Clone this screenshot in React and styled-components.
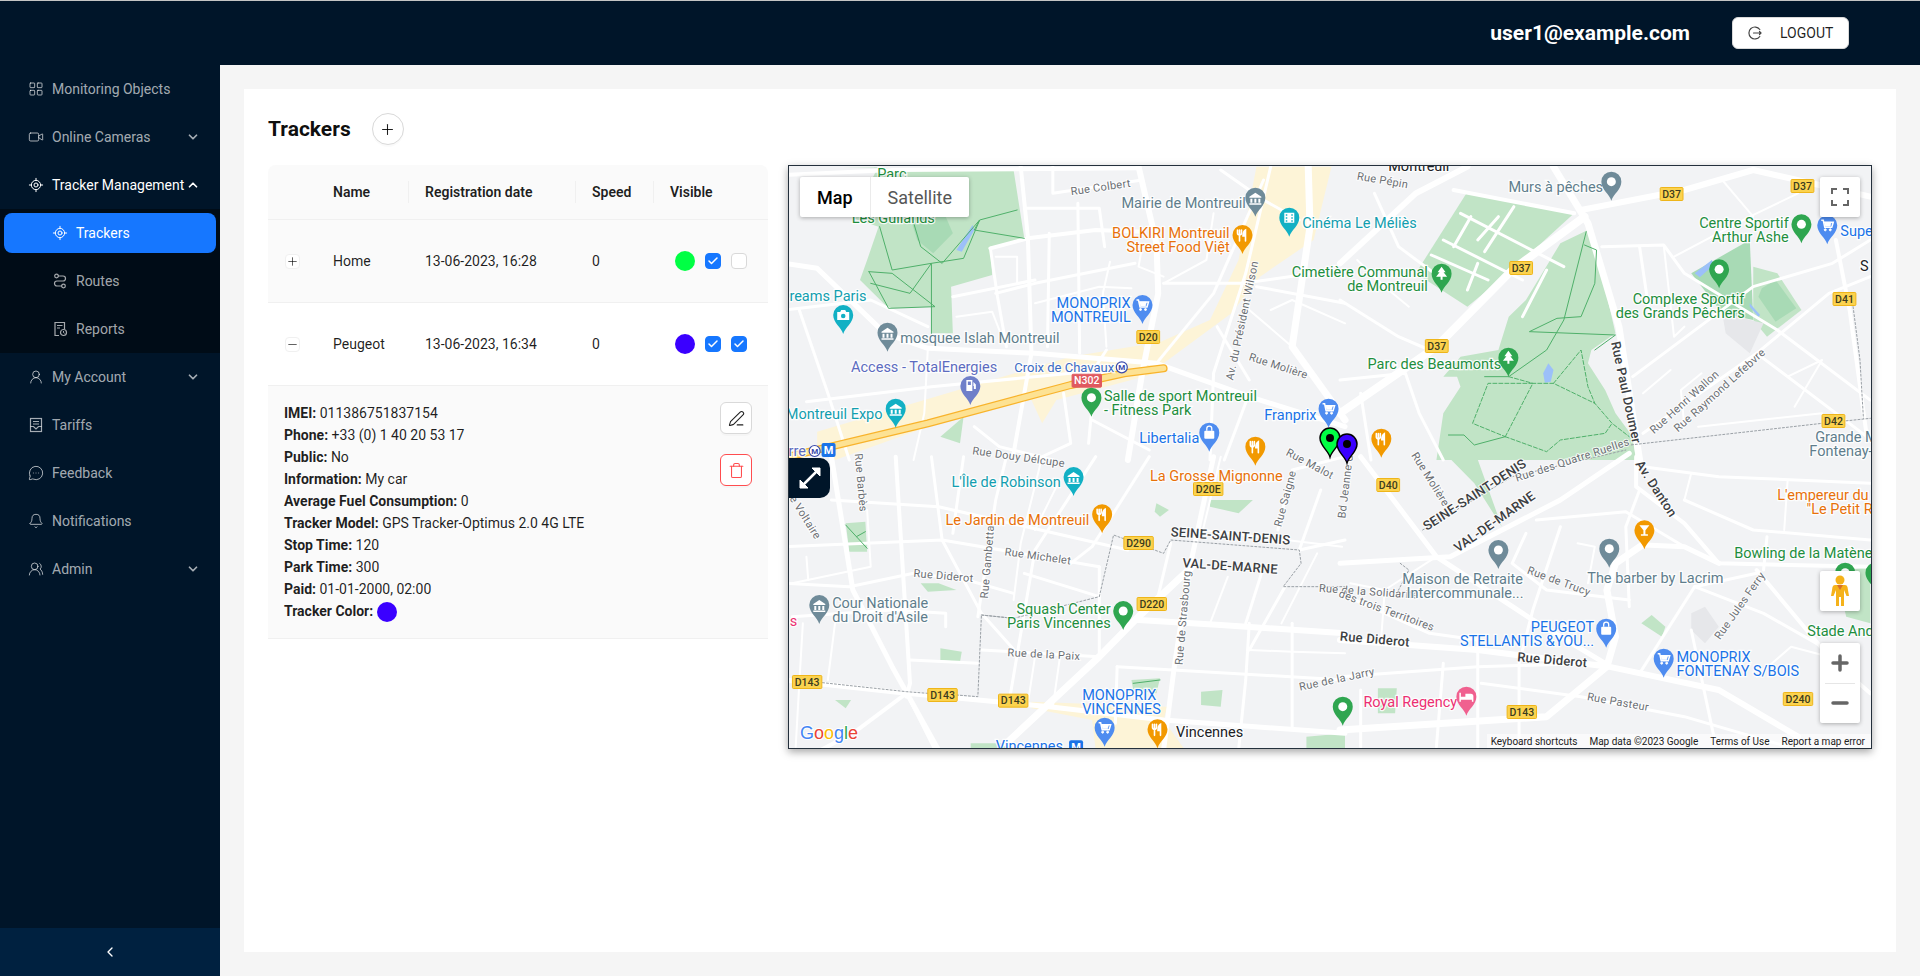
import React from "react";
import styled, { createGlobalStyle } from "styled-components";
import {
  LayoutGrid,
  Video,
  LocateFixed,
  UserRound,
  MessageCircleMore,
  Bell,
  UsersRound,
  ChevronDown,
  ChevronUp,
  ChevronLeft,
  Plus,
  Minus,
  Check,
  PenLine,
  Trash,
} from "lucide-react";

const GlobalStyle = createGlobalStyle`
  html, body { margin: 0; padding: 0; height: 100%; }
  body { font-family: Roboto, "Liberation Sans", sans-serif; font-size: 14px; color: rgba(0,0,0,.88); background: #f5f5f5; }
  * { box-sizing: border-box; }
`;

const Page = styled.div`
  display: flex;
  flex-direction: column;
  height: 976px;
  overflow: hidden;
`;

const Header = styled.header`
  flex: 0 0 65px;
  display: flex;
  align-items: center;
  justify-content: flex-end;
  gap: 42px;
  padding-right: 71px;
  background: #001529;
  border-top: 1px solid #c4c4c4;
`;

const UserName = styled.div`
  color: #fff;
  font-size: 21px;
  font-weight: 700;
  line-height: 28px;
`;

const LogoutButton = styled.button`
  width: 117px;
  height: 32px;
  display: flex;
  align-items: center;
  gap: 18px;
  padding: 0 0 0 15px;
  background: #fff;
  border: 1px solid #d9d9d9;
  border-radius: 6px;
  font: 400 14px Roboto, sans-serif;
  color: rgba(0, 0, 0, 0.88);
`;

const Body = styled.div`
  flex: 1;
  display: flex;
  min-height: 0;
`;

const Sidebar = styled.aside`
  flex: 0 0 220px;
  width: 220px;
  min-width: 0;
  display: flex;
  flex-direction: column;
  background: #001529;
`;

const Menu = styled.nav`
  flex: 1;
  display: flex;
  flex-direction: column;
`;

const SubMenu = styled.div`
  display: flex;
  flex-direction: column;
  background: #000c17;
`;

const MenuItem = styled.div`
  position: relative;
  height: 40px;
  margin: 4px;
  display: flex;
  align-items: center;
  gap: 8px;
  padding-left: ${(p) => (p.$sub ? "48px" : "24px")};
  border-radius: 8px;
  white-space: nowrap;
  color: ${(p) => (p.$active || p.$open ? "#fff" : "rgba(255,255,255,.65)")};
  background: ${(p) => (p.$active ? "#1677ff" : "transparent")};

  svg {
    flex-shrink: 0;
  }
`;

const Arrow = styled.span`
  position: absolute;
  right: 16px;
  top: 13px;
  display: flex;
`;

const Collapse = styled.div`
  flex: 0 0 48px;
  display: flex;
  align-items: center;
  justify-content: center;
  background: #002140;
  color: #fff;
`;

const Content = styled.main`
  flex: 1;
  padding: 24px;
  min-width: 0;
`;

const Card = styled.section`
  height: 100%;
  padding: 24px;
  background: #fff;
`;

const TitleRow = styled.div`
  display: flex;
  align-items: center;
  gap: 21px;
  height: 32px;
  margin-bottom: 20px;
`;

const Title = styled.h1`
  margin: 0;
  font-size: 21px;
  font-weight: 700;
  line-height: 28px;
  color: rgba(0, 0, 0, 0.95);
`;

const RoundButton = styled.button`
  width: 32px;
  height: 32px;
  padding: 0;
  display: flex;
  align-items: center;
  justify-content: center;
  background: #fff;
  border: 1px solid #d9d9d9;
  border-radius: 50%;
  box-shadow: 0 2px 0 rgba(0, 0, 0, 0.02);
  color: rgba(0, 0, 0, 0.88);
`;

const Split = styled.div`
  display: flex;
  gap: 20px;
  align-items: flex-start;
`;

const Table = styled.div`
  flex: 0 0 500px;
`;

const Row = styled.div`
  display: grid;
  grid-template-columns: 49px 92px 167px 78px 114px;
  align-items: center;
  height: ${(p) => (p.$head ? "55px" : "83px")};
  background: ${(p) => (p.$shaded ? "#fafafa" : "#fff")};
  border-bottom: 1px solid #f0f0f0;
  border-radius: ${(p) => (p.$head ? "8px 8px 0 0" : "0")};
`;

const HeadCell = styled.div`
  position: relative;
  padding-left: 16px;
  font-weight: 600;
  line-height: 22px;

  &:not(:last-child):not(:first-child)::after {
    content: "";
    position: absolute;
    top: 0;
    right: 0;
    width: 1px;
    height: 22px;
    background: #f0f0f0;
  }
`;

const Cell = styled.div`
  padding-left: 16px;
  line-height: 22px;
`;

const ExpandCell = styled.div`
  display: flex;
  padding-left: 17px;
`;

const ExpandIcon = styled.span`
  width: 15px;
  height: 15px;
  display: flex;
  align-items: center;
  justify-content: center;
  background: #fff;
  border: 1px solid #f0f0f0;
  border-radius: 4px;
`;

const VisibleCell = styled.div`
  display: flex;
  align-items: center;
  gap: 10px;
  padding-left: 21px;
`;

const Dot = styled.span`
  display: inline-block;
  width: 20px;
  height: 20px;
  border-radius: 50%;
  background: ${(p) => p.$color};
  vertical-align: middle;
`;

const CheckBox = styled.span`
  width: 16px;
  height: 16px;
  display: flex;
  align-items: center;
  justify-content: center;
  border-radius: 4px;
  color: #fff;
  background: ${(p) => (p.$on ? "#1677ff" : "#fff")};
  border: 1px solid ${(p) => (p.$on ? "#1677ff" : "#d9d9d9")};
`;

const Details = styled.div`
  display: flex;
  justify-content: space-between;
  padding: 16px 16px 16px;
  height: 253px;
  background: #fafafa;
  border-bottom: 1px solid #f0f0f0;
`;

const InfoLine = styled.div`
  line-height: 22px;
  white-space: nowrap;
`;

const Actions = styled.div`
  display: flex;
  flex-direction: column;
  gap: 20px;
`;

const IconButton = styled.button`
  width: 32px;
  height: 32px;
  padding: 0;
  display: flex;
  align-items: center;
  justify-content: center;
  background: #fff;
  border-radius: 6px;
  border: 1px solid ${(p) => (p.$danger ? "#ff4d4f" : "#d9d9d9")};
  color: ${(p) => (p.$danger ? "#ff4d4f" : "rgba(0,0,0,.88)")};
  box-shadow: 0 2px 0 rgba(0, 0, 0, 0.02);
`;

const MapFrame = styled.div`
  position: relative;
  flex: 0 0 1084px;
  height: 584px;
  overflow: hidden;
  border: 1px solid #24303c;
  box-shadow: 0 3px 8px rgba(0, 0, 0, 0.35);
  background: #f2f3f5;
`;

const MapCanvas = styled.svg`
  display: block;
  width: 1082px;
  height: 582px;
  font-family: Roboto, sans-serif;

  polyline, polygon {
    vector-effect: non-scaling-stroke;
    stroke-linejoin: round;
    stroke-linecap: round;
  }
`;

const LABEL_COLORS = {
  green: "#1e8e3e",
  blue: "#1a73e8",
  teal: "#129eaf",
  orange: "#e8710a",
  slate: "#5f7d8c",
  indigo: "#5c6bc0",
  pink: "#ec2f72",
  ink: "#202124",
  transit: "#3c6bc4",
};

const Label = styled.text`
  font-size: ${(p) => (p.$c === "transit" ? "13px" : "14.5px")};
  fill: ${(p) => LABEL_COLORS[p.$c]};
  stroke: #fff;
  stroke-width: 2.5px;
  stroke-opacity: 0.85;
  paint-order: stroke;
`;

const StreetName = styled.text`
  font-size: ${(p) => (p.$big ? "13px" : "11px")};
  font-weight: ${(p) => (p.$big ? 500 : 400)};
  letter-spacing: ${(p) => (p.$big ? "0.2px" : "0.3px")};
  fill: ${(p) => (p.$big ? "#3c4043" : "#6b6f74")};
  stroke: #fff;
  stroke-width: 2px;
  stroke-opacity: 0.8;
  paint-order: stroke;
`;

const ShieldText = styled.text`
  font-size: 10.5px;
  font-weight: 500;
  fill: ${(p) => (p.$red ? "#fff" : "#3c3c1e")};
  text-anchor: middle;
  dominant-baseline: central;
`;

const MetroText = styled.text`
  font-size: 8px;
  font-weight: 700;
  fill: #3949ab;
  text-anchor: middle;
  dominant-baseline: central;
`;

const MetroSquare = styled.text`
  font-size: 11px;
  font-weight: 700;
  fill: #fff;
  text-anchor: middle;
  dominant-baseline: central;
`;

const MapSwitch = styled.div`
  position: absolute;
  left: 11px;
  top: 11px;
  display: flex;
  height: 40px;
  background: #fff;
  border-radius: 2px;
  box-shadow: 0 1px 4px rgba(0, 0, 0, 0.3);
  font-size: 18px;
`;

const SwitchTab = styled.div`
  display: flex;
  align-items: center;
  padding: 0 17px;
  color: ${(p) => (p.$active ? "#000" : "#565656")};
  font-weight: ${(p) => (p.$active ? 500 : 400)};
  border-right: ${(p) => (p.$active ? "1px solid #ebebeb" : "0")};
`;

const MapControl = styled.div`
  position: absolute;
  right: 11px;
  top: ${(p) => p.$top}px;
  width: 40px;
  height: ${(p) => p.$h || 40}px;
  display: flex;
  flex-direction: column;
  align-items: center;
  justify-content: center;
  background: #fff;
  border-radius: 2px;
  box-shadow: 0 1px 4px rgba(0, 0, 0, 0.3);
  color: #666;
`;

const ZoomStep = styled.div`
  flex: 1;
  width: 30px;
  display: flex;
  align-items: center;
  justify-content: center;

  & + & {
    border-top: 1px solid #e6e6e6;
  }
`;

const ExpandMap = styled.div`
  position: absolute;
  left: 0;
  top: 292px;
  width: 41px;
  height: 40px;
  display: flex;
  align-items: center;
  justify-content: center;
  background: #001529;
  border-radius: 0 10px 10px 0;
  color: #fff;
`;

const Attribution = styled.div`
  position: absolute;
  right: 0;
  bottom: 0;
  display: flex;
  gap: 12px;
  height: 14px;
  padding: 0 6px 0 4px;
  align-items: center;
  background: rgba(255, 255, 255, 0.6);
  font-size: 10px;
  color: #222;
  white-space: nowrap;
`;

// the map is traced in four crops, each with its own origin and scale
const QUADS = {
  a: [785, 160, 2.8],
  b: [1340, 160, 2.904],
  c: [785, 450, 2.8],
  d: [1340, 450, 2.904],
};
const MAP_X = 789;
const MAP_Y = 166;

const at = (q, x, y) => [
  QUADS[q][0] - MAP_X + x / QUADS[q][2],
  QUADS[q][1] - MAP_Y + y / 3,
];
const quadTransform = (q) =>
  `translate(${QUADS[q][0] - MAP_X} ${QUADS[q][1] - MAP_Y}) scale(${1 / QUADS[q][2]} ${1 / 3})`;

const ZONES = [
  ["a", "1320,20 1530,20 1480,240 1330,350 1300,390 1250,460 1060,610 1030,630 1000,570 1190,480 1270,300"],
  ["a", "90,815 800,590 1000,555 1040,640 760,720 720,790 690,720 400,800 140,900 90,860"],
  ["c", "690,755 1070,770 1060,810 1120,900 870,900 860,810 690,775"],
];

const PARKS = [
  ["a", "160,22 640,30 670,235 575,262 580,345 465,380 470,520 410,520 410,440 290,445 210,360 230,300 262,200 190,175 260,22", "#c1e4c6"],
  ["a", "350,170 450,170 470,220 415,280 370,240", "#a8dab5"],
  ["b", "370,95 680,160 510,320 370,440 220,340", "#c1e4c6"],
  ["b", "720,210 750,270 760,340 800,520 730,570 720,610 770,690 800,760 850,830 860,900 280,900 300,760 350,680 340,650 300,650 350,590 460,570 490,470 540,420 640,250", "#c1e4c6"],
  ["b", "1020,340 1190,240 1200,480 1110,460", "#a8dab5"],
  ["b", "1200,320 1270,340 1340,450 1240,530 1200,480", "#c1e4c6"],
  ["b", "1225,385 1265,360 1325,445 1265,485 1215,410", "#a8dab5"],
  ["b", "1110,460 1230,490 1190,580 1120,520", "#e6e7ea"],
  ["a", "435,830 500,770 490,850", "#c1e4c6"],
  ["c", "1190,150 1310,150 1270,190 1190,170", "#c1e4c6"],
  ["c", "1040,160 1075,180 1050,200 1035,185", "#c1e4c6"],
  ["c", "170,220 225,215 230,305 180,305", "#c1e4c6"],
  ["c", "380,400 430,400 480,420 400,425", "#c1e4c6"],
  ["c", "435,595 495,605 490,635 435,630", "#c1e4c6"],
  ["c", "970,690 1050,685 1040,730 975,720", "#c1e4c6"],
  ["c", "1165,725 1225,720 1220,770 1165,765", "#c1e4c6"],
  ["c", "140,750 185,750 170,775", "#c1e4c6"],
  ["c", "520,880 620,880 620,900 520,900", "#c1e4c6"],
  ["c", "1460,860 1568,850 1568,900 1460,900", "#c1e4c6"],
  ["d", "875,520 905,495 945,530 935,560", "#c1e4c6"],
  ["d", "110,715 165,715 160,790 110,790", "#c1e4c6"],
  ["d", "1020,490 1060,470 1100,530 1060,580 1020,540", "#e6e7ea"],
  ["d", "1440,365 1540,350 1540,520 1470,500", "#c1e4c6"],
  ["d", "295,0 390,0 470,230 390,100", "#c1e4c6"],
];

const WATER = [
  ["a", "525,195 530,210 495,275 480,270"],
  ["b", "590,640 605,610 620,630 612,665 595,668"],
  ["b", "1030,340 1080,300 1085,315 1045,352"],
  ["b", "1190,430 1220,465 1215,470 1190,440"],
];

const ROADS = [
  // top left
  ["a", 6, "990,20 1040,250 1045,400 1000,640 960,900"],
  ["a", 3, "1360,20 1290,340 1200,640 1190,900"],
  ["a", 5, "0,310 90,325 280,520 400,565 700,580 1040,610 1300,710 1568,800"],
  ["a", 4, "660,20 680,230 690,580 640,880"],
  ["a", 4, "575,265 680,235 870,210 1000,215"],
  ["a", 3, "575,265 595,410 620,560"],
  ["a", 3, "590,400 700,370 980,310"],
  ["a", 3, "820,130 825,580"],
  ["a", 3, "670,145 880,145 895,260"],
  ["a", 3, "750,20 750,100 1000,60"],
  ["a", 4, "0,45 300,30 990,25"],
  ["a", 3, "470,410 700,360"],
  ["a", 2, "480,470 580,455 600,510"],
  ["a", 3, "740,220 735,560"],
  ["a", 3, "60,725 410,680 800,640 1000,640"],
  ["a", 3, "1040,610 1200,400 1340,60"],
  ["a", 7, "1465,20 1470,200 1420,560 1568,780"],
  ["a", 3, "1060,370 1280,370 1480,340"],
  ["a", 3, "1210,500 1300,660"],
  ["a", 3, "1320,380 1568,430"],
  ["a", 3, "0,450 240,420 400,500"],
  ["a", 3, "40,450 120,700 180,900"],
  ["a", 2, "400,565 390,760 360,900"],
  ["a", 3, "860,780 1020,870"],
  ["a", 3, "900,570 870,620 850,850"],
  ["a", 3, "1220,30 1340,120 1440,180"],
  ["a", 3, "1300,700 1230,900"],
  ["a", 3, "780,700 800,850 700,900"],
  ["a", 3, "530,800 600,860 750,900"],
  ["a", 2, "1000,260 990,320 1060,350"],
  ["a", 2, "910,305 890,400 900,560"],
  ["a", 2, "700,430 880,380 970,385"],
  ["a", 2, "590,290 650,290 650,370"],
  ["a", 2, "1200,160 1180,300 1060,370"],
  ["a", 2, "1360,450 1420,420 1568,490"],
  ["a", 2, "1300,450 1420,560"],
  // top right
  ["b", 6, "0,310 220,100 370,20"],
  ["b", 7, "620,20 720,190 810,500 870,900"],
  ["b", 6, "700,150 1000,90 1200,30 1540,110"],
  ["b", 8, "710,170 500,330 280,560 0,760"],
  ["b", 4, "330,90 680,160"],
  ["b", 3, "760,260 940,255 1000,340 1270,510 1540,720"],
  ["b", 3, "850,650 1200,380 1430,310 1540,240"],
  ["b", 3, "1210,580 1420,400 1540,350"],
  ["b", 4, "1440,240 1480,450 1530,830"],
  ["b", 3, "880,820 1210,580 1530,830"],
  ["b", 3, "0,660 190,640 230,760 300,900"],
  ["b", 3, "100,100 170,260 300,360"],
  ["b", 3, "0,420 170,530 260,570"],
  ["b", 3, "60,700 90,900"],
  ["b", 3, "870,260 900,470"],
  ["b", 2, "970,290 1190,170 1330,100"],
  ["b", 2, "1040,800 1400,760"],
  ["b", 3, "350,160 650,320"],
  ["b", 3, "300,240 530,360"],
  ["b", 3, "265,285 430,360"],
  ["b", 3, "505,140 420,275"],
  ["b", 3, "380,170 330,260"],
  ["b", 3, "460,170 400,240"],
  ["b", 3, "400,310 370,390"],
  ["b", 3, "600,330 530,470"],
  ["b", 2, "50,300 130,380 200,440"],
  ["b", 2, "940,255 970,530 1000,500"],
  ["b", 2, "1110,60 1200,170"],
  ["b", 2, "1050,640 990,690 1000,800"],
  ["b", 2, "1300,650 1400,600 1320,740"],
  ["b", 2, "880,700 960,630"],
  // bottom left
  ["c", 5, "130,20 190,420 300,650 430,900"],
  ["c", 4, "310,20 350,700 340,740"],
  ["c", 3, "410,20 440,270 550,490 650,610"],
  ["c", 3, "0,290 440,270 880,350"],
  ["c", 3, "130,150 430,170 960,300"],
  ["c", 3, "670,370 880,440"],
  ["c", 3, "620,20 590,150 540,500"],
  ["c", 3, "870,20 700,300 630,740"],
  ["c", 3, "1020,20 860,290 800,340"],
  ["c", 7, "1140,350 990,500 880,620 620,880"],
  ["c", 5, "1200,20 1130,370 1090,650 1060,900"],
  ["c", 3, "0,400 180,410 360,370 510,390 640,430"],
  ["c", 5, "0,690 340,730 740,770 1060,810 1568,850"],
  ["c", 4, "340,730 190,850 100,900"],
  ["c", 3, "340,730 420,900"],
  ["c", 6, "990,510 1220,525 1568,550"],
  ["c", 3, "550,600 880,620"],
  ["c", 3, "350,630 540,640"],
  ["c", 3, "930,650 1568,690"],
  ["c", 3, "1300,520 1290,690 1270,900"],
  ["c", 3, "1420,520 1420,830"],
  ["c", 3, "1340,350 1290,520"],
  ["c", 3, "880,350 880,620"],
  ["c", 3, "20,500 300,480 450,490 450,530"],
  ["c", 3, "1400,410 1300,600"],
  ["c", 3, "1080,280 1040,460"],
  ["c", 3, "1500,120 1440,300 1568,270"],
  ["c", 3, "1568,20 1420,60 1380,240"],
  ["c", 3, "930,650 925,820"],
  ["c", 2, "60,320 65,390"],
  ["c", 3, "500,20 470,250"],
  ["c", 2, "230,180 240,350 20,400"],
  ["c", 2, "760,110 700,240"],
  ["c", 2, "720,20 660,280 640,450"],
  ["c", 2, "140,520 120,690"],
  ["c", 2, "50,520 40,700 30,890"],
  ["c", 2, "700,620 680,760"],
  ["c", 2, "770,620 750,770"],
  ["c", 2, "1220,20 1170,240 1560,290"],
  ["c", 2, "1240,380 1190,520"],
  ["c", 2, "1490,310 1390,520"],
  ["c", 2, "1300,600 1420,605 1568,610"],
  // bottom right
  ["d", 6, "0,570 400,600 780,650 1100,720 1330,860"],
  ["d", 5, "60,20 280,320 560,510 770,640"],
  ["d", 5, "840,10 640,150 320,320 0,340"],
  ["d", 4, "860,20 860,110 1000,220 1100,340 1540,350"],
  ["d", 7, "885,280 800,340 775,420 800,560 775,650 600,800 0,840"],
  ["d", 5, "885,285 1000,290 1100,340"],
  ["d", 3, "570,210 830,185 1000,290"],
  ["d", 3, "870,120 830,230 840,470"],
  ["d", 4, "1210,360 1420,620 1540,730"],
  ["d", 3, "1210,370 1030,410 870,670"],
  ["d", 3, "1000,150 1200,240 1540,270"],
  ["d", 3, "880,50 1100,80 1540,100"],
  ["d", 3, "410,700 700,740 1000,800 1300,890"],
  ["d", 3, "0,680 400,650 750,640"],
  ["d", 3, "540,250 500,340 600,420 840,450"],
  ["d", 3, "640,230 560,480 520,640 520,890"],
  ["d", 3, "400,560 400,890"],
  ["d", 3, "300,640 280,890"],
  ["d", 3, "60,720 60,890"],
  ["d", 3, "1030,410 1230,490 1400,590"],
  ["d", 3, "1020,540 1090,880"],
  ["d", 3, "1240,260 1230,360"],
  ["d", 3, "0,430 260,550 400,570"],
  ["d", 2, "1000,150 1020,70"],
  ["d", 2, "1300,90 1290,240"],
  ["d", 2, "1210,680 1310,590 1420,620"],
  ["d", 2, "130,420 120,560"],
  ["d", 2, "30,400 130,420 280,320"],
  ["d", 2, "690,280 740,290 720,400"],
];

const PARK_PATHS = [
  ["a", "265,200 300,330 410,310 500,295 545,180 650,150"],
  ["a", "355,170 380,260 440,310 545,180 530,210 670,235"],
  ["a", "235,335 300,340 420,440 290,445 235,335"],
  ["a", "240,370 350,400 410,310 410,520"],
  ["b", "715,215 650,480 600,570 490,650 420,650"],
  ["b", "710,255 745,270 740,370 700,470 630,475 550,515 800,525 740,570"],
  ["b", "315,825 360,825 390,855 480,830"],
  ["c", "170,225 200,260 230,295"],
  ["c", "200,260 225,245"],
  ["c", "975,700 1050,690"],
];

const PARK_TRAILS = [
  ["b", "480,830 560,670 430,670 385,790 480,830"],
  ["b", "490,650 560,670 620,670 740,730 790,790 840,830"],
  ["b", "620,670 700,570 720,680 740,730"],
  ["b", "480,830 600,875 640,840 770,820 790,790"],
];

const BORDERS = [
  ["b", "800,860 1400,790 1540,775"],
  ["b", "1490,440 1510,600 1520,775"],
  ["c", "105,698 340,725 400,730"],
  ["c", "480,735 540,740 550,495 640,505 880,440 920,255 1060,310 1080,270 1440,300 1445,340 1395,410 1568,410"],
  ["c", "550,495 640,505"],
  ["d", "240,240 500,80 830,0"],
  ["d", "175,340 200,360 160,440"],
];

const SHIELDS = [
  ["a", 1017, 531, "D20"],
  ["b", 963, 102, "D37"],
  ["b", 1343, 78, "D37"],
  ["b", 526, 324, "D37"],
  ["b", 281, 558, "D37"],
  ["b", 1465, 417, "D41"],
  ["b", 1433, 783, "D42"],
  ["c", 1185, 117, "D20E"],
  ["c", 990, 279, "D290"],
  ["c", 1027, 462, "D220"],
  ["c", 62, 696, "D143"],
  ["c", 441, 735, "D143"],
  ["c", 639, 752, "D143"],
  ["d", 140, 105, "D40"],
  ["d", 1330, 747, "D240"],
  ["d", 528, 786, "D143"],
];

const LABELS = [
  ["a", 258, 42, "Parc", "green"],
  ["a", 187, 175, "Les Guilands", "green"],
  ["a", 942, 130, "Mairie de Montreuil", "slate"],
  ["a", 1448, 190, "Cinéma Le Méliès", "teal"],
  ["a", 1245, 220, "BOLKIRI Montreuil", "orange", "end"],
  ["a", 1245, 262, "Street Food Việt", "orange", "end"],
  ["b", 255, 337, "Cimetière Communal", "green", "end"],
  ["b", 255, 379, "de Montreuil", "green", "end"],
  ["a", 228, 408, "Dreams Paris", "teal", "end"],
  ["a", 323, 535, "mosquee Islah Montreuil", "slate"],
  ["a", 968, 430, "MONOPRIX", "blue", "end"],
  ["a", 968, 472, "MONTREUIL", "blue", "end"],
  ["a", 185, 622, "Access - TotalEnergies", "indigo"],
  ["a", 642, 622, "Croix de Chavaux", "transit"],
  ["a", 273, 763, "Montreuil Expo", "teal", "end"],
  ["a", 893, 709, "Salle de sport Montreuil", "green"],
  ["a", 893, 751, "- Fitness Park", "green"],
  ["a", 1488, 766, "Franprix", "blue", "end"],
  ["a", 992, 835, "Libertalia", "blue"],
  ["a", 10, 873, "rre", "indigo"],
  ["b", 489, 82, "Murs à pêches", "slate"],
  ["b", 1303, 190, "Centre Sportif", "green", "end"],
  ["b", 1303, 232, "Arthur Ashe", "green", "end"],
  ["b", 1453, 214, "Super", "blue"],
  ["b", 1510, 318, "S", "ink"],
  ["b", 1012, 418, "Complexe Sportif", "green", "middle"],
  ["b", 988, 460, "des Grands Pêchers", "green", "middle"],
  ["b", 80, 613, "Parc des Beaumonts", "green"],
  ["b", 1380, 832, "Grande Mare", "slate"],
  ["b", 1363, 874, "Fontenay-", "slate"],
  ["b", 140, 18, "Montreuil", "ink"],
  ["c", 772, 97, "L'Île de Robinson", "teal", "end"],
  ["c", 1022, 80, "La Grosse Mignonne", "orange"],
  ["c", 852, 210, "Le Jardin de Montreuil", "orange", "end"],
  ["c", 132, 460, "Cour Nationale", "slate"],
  ["c", 132, 502, "du Droit d'Asile", "slate"],
  ["c", 912, 478, "Squash Center", "green", "end"],
  ["c", 912, 520, "Paris Vincennes", "green", "end"],
  ["c", 832, 737, "MONOPRIX", "blue"],
  ["c", 832, 778, "VINCENNES", "blue"],
  ["c", 1095, 847, "Vincennes", "ink"],
  ["c", 590, 890, "Vincennes", "blue"],
  ["c", 13, 515, "s", "pink"],
  ["d", 1270, 136, "L'empereur du", "orange"],
  ["d", 1355, 178, "\"Le Petit R", "orange"],
  ["d", 356, 388, "Maison de Retraite", "slate", "middle"],
  ["d", 363, 430, "Intercommunale...", "slate", "middle"],
  ["d", 718, 385, "The barber by Lacrim", "slate"],
  ["d", 1145, 310, "Bowling de la Matène", "green"],
  ["d", 1357, 544, "Stade And", "green"],
  ["d", 738, 532, "PEUGEOT", "blue", "end"],
  ["d", 738, 574, "STELLANTIS &YOU...", "blue", "end"],
  ["d", 977, 622, "MONOPRIX", "blue"],
  ["d", 977, 664, "FONTENAY S/BOIS", "blue"],
  ["d", 68, 757, "Royal Regency", "pink"],
];

const STREETS = [
  ["a", 800, 95, "Rue Colbert", -8],
  ["a", 1300, 590, "Rue Molière", 18],
  ["a", 1245, 660, "Av. du Président Wilson", -78],
  ["a", 525, 872, "Rue Douy Délcupe", 8],
  ["c", 205, 10, "Rue Barbès", 85],
  ["b", 50, 48, "Rue Pépin", 10],
  ["b", 800, 545, "Rue Paul Doumer", 78, true],
  ["b", 905, 815, "Rue Henri Wallon", -42],
  ["b", 975, 810, "Rue Raymond Lefebvre", -42],
  ["d", 510, 85, "Rue des Quatre Ruelles", -18],
  ["d", 215, 10, "Rue Molière", 58],
  ["c", 615, 305, "Rue Michelet", 8],
  ["c", 360, 370, "Rue Diderot", 5],
  ["c", 558, 445, "Rue Gambetta", -85],
  ["c", 20, 140, "e Voltaire", 58],
  ["c", 1380, 230, "Rue Saigne", -75],
  ["d", 5, 205, "Bd Jeanne d'Arc", -83],
  ["c", 1405, 5, "Rue Malot", 28],
  ["c", 1103, 645, "Rue de Strasbourg", -85],
  ["c", 623, 608, "Rue de la Paix", 3],
  ["c", 1440, 712, "Rue de la Jarry", -12],
  ["c", 1495, 415, "Rue de la Solidarité", 4],
  ["d", -2, 430, "des trois Territoires", 20],
  ["d", 0, 558, "Rue Diderot", 5, true],
  ["d", 515, 620, "Rue Diderot", 5, true],
  ["d", 868, 35, "Av. Danton", 57, true],
  ["d", 545, 360, "Rue de Trucy", 20],
  ["d", 1095, 565, "Rue Jules Ferry", -55],
  ["d", 718, 740, "Rue Pasteur", 10],
];

const PIN_COLORS = {
  orange: "#f29900",
  green: "#2fa650",
  blue: "#4e8cf0",
  slate: "#6f8b99",
  teal: "#12b0c4",
  indigo: "#6f7fc9",
  pink: "#f0608f",
};

const PINS = [
  ["a", 1317, 170, "slate", "bank"],
  ["a", 1412, 230, "teal", "film"],
  ["a", 1281, 282, "orange", "fork"],
  ["b", 295, 398, "green", "tree"],
  ["a", 163, 522, "teal", "camera"],
  ["a", 287, 575, "slate", "bank"],
  ["a", 1001, 492, "blue", "cart"],
  ["a", 519, 735, "indigo", "fuel"],
  ["a", 310, 803, "teal", "bank"],
  ["a", 858, 770, "green", "dot"],
  ["a", 1522, 803, "blue", "cart"],
  ["a", 1188, 875, "blue", "bag"],
  ["c", 1317, 47, "orange", "fork"],
  ["b", 120, 893, "orange", "fork"],
  ["b", 788, 122, "slate", "dot"],
  ["b", 1340, 250, "green", "dot"],
  ["b", 1415, 253, "blue", "cart"],
  ["b", 1101, 385, "green", "dot"],
  ["b", 489, 650, "green", "tree"],
  ["c", 808, 138, "teal", "bank"],
  ["c", 888, 250, "orange", "fork"],
  ["c", 96, 522, "slate", "bank"],
  ["c", 947, 540, "green", "dot"],
  ["c", 895, 890, "blue", "cart"],
  ["c", 1043, 895, "orange", "fork"],
  ["d", 884, 298, "orange", "glass"],
  ["d", 460, 357, "slate", "dot"],
  ["d", 782, 353, "slate", "dot"],
  ["d", 1467, 425, "green", "dot"],
  ["d", 1555, 425, "green", "dot"],
  ["d", 773, 593, "blue", "bag"],
  ["d", 940, 683, "blue", "cart"],
  ["d", 367, 797, "pink", "bed"],
  ["d", 8, 827, "green", "dot"],
];

const PIN_PATH = "M0 0C-2-7-10-11-10-19A10 10 0 1 1 10-19C10-11 2-7 0 0Z";

function PinGlyph({ kind }) {
  switch (kind) {
    case "fork":
      return (
        <g stroke="#fff" fill="none" strokeWidth="1.6" strokeLinecap="round">
          <path d="M-3-24v4.5M-3-20-3-13M-5-24v3a2 2 0 0 0 4 0v-3" />
          <path d="M3-13V-24c-2 1-2.5 3-2.5 6H3" fill="#fff" />
        </g>
      );
    case "cart":
      return (
        <g fill="#fff" stroke="#fff">
          <path d="M-6-24h2l1.5 7h7l1.5-5h-9" fill="none" strokeWidth="1.5" />
          <path d="M-3-22h7l-1 4h-5z" strokeWidth=".5" />
          <circle cx="-2" cy="-14.5" r="1" />
          <circle cx="3" cy="-14.5" r="1" />
        </g>
      );
    case "bag":
      return (
        <g>
          <rect x="-5" y="-21" width="10" height="8" rx="1" fill="#fff" />
          <path d="M-2.5-21v-2a2.5 2.5 0 0 1 5 0v2" fill="none" stroke="#fff" strokeWidth="1.3" />
        </g>
      );
    case "tree":
      return <path d="M0-26-4-20.5h2l-3.5 4.5H-1v3h2v-3h4.5L2-20.5h2z" fill="#fff" />;
    case "bank":
      return <path d="M-6-20 0-24 6-20v1H-6zM-5-18h2v4h-2zM-1-18h2v4h-2zM3-18h2v4H3zM-6-13.5H6V-12H-6z" fill="#fff" />;
    case "film":
      return <path d="M-5-24H5v10H-5zM-3.5-22.5v1.5h1.5v-1.5zM-3.5-19.5v1.5h1.5v-1.5zM-3.5-16.5v1.5h1.5v-1.5zM2-22.5v1.5h1.5v-1.5zM2-19.5v1.5h1.5v-1.5zM2-16.5v1.5h1.5v-1.5z" fill="#fff" fillRule="evenodd" />;
    case "camera":
      return (
        <g>
          <path d="M-6-22h3l1-2h4l1 2h3v8H-6z" fill="#fff" />
          <circle cy="-18" r="2.3" fill="#12b0c4" />
        </g>
      );
    case "fuel":
      return <path d="M-4-25H2v11H-4zM-2.5-23.5v3.5h3v-3.5zM3-23l2.5 2.5V-16H3.5v-3H3z" fill="#fff" fillRule="evenodd" />;
    case "glass":
      return <path d="M-5-24H5L1-19v4h2.5v1.5h-7V-15H-1v-4z" fill="#fff" />;
    case "bed":
      return <path d="M-7-23h1.5v4H-1v-3h5.5a2.5 2.5 0 0 1 2.5 2.5V-14H5.5v-2h-11v2H-7z" fill="#fff" />;
    default:
      return <circle cy="-19" r="4.5" fill="#fff" />;
  }
}

function Pin({ q, x, y, color, glyph }) {
  const [px, py] = at(q, x, y);
  return (
    <g transform={`translate(${px} ${py})`}>
      <path d={PIN_PATH} fill={PIN_COLORS[color]} />
      <PinGlyph kind={glyph} />
    </g>
  );
}

function TrackerPin({ x, y, color }) {
  return (
    <g transform={`translate(${x} ${y})`}>
      <path d={PIN_PATH} fill={color} stroke="#000" strokeWidth="1.5" />
      <circle cy="-19" r="4" fill="#000" />
    </g>
  );
}

function Shield({ q, x, y, text, red }) {
  const [px, py] = at(q, x, y);
  const w = text.length * 6.6 + 3;
  return (
    <g transform={`translate(${px} ${py})`}>
      <rect
        x={-w / 2}
        y="-6.5"
        width={w}
        height="13"
        rx="1"
        fill={red ? "#e0585f" : "#fbd24e"}
        stroke={red ? "#e0585f" : "#eeb51a"}
      />
      <ShieldText $red={red}>{text}</ShieldText>
    </g>
  );
}

function Street({ q, x, y, text, angle, big }) {
  const [px, py] = at(q, x, y);
  return (
    <StreetName $big={big} transform={`translate(${px} ${py}) rotate(${angle})`} dominantBaseline="central">
      {text}
    </StreetName>
  );
}

function MetroBadge({ q, x, y }) {
  const [px, py] = at(q, x, y);
  return (
    <g transform={`translate(${px} ${py})`}>
      <circle r="5.5" fill="#fff" stroke="#3949ab" strokeWidth="1.2" />
      <MetroText>M</MetroText>
    </g>
  );
}

function MetroSign({ q, x, y }) {
  const [px, py] = at(q, x, y);
  return (
    <g transform={`translate(${px} ${py})`}>
      <rect x="-7" y="-7" width="14" height="14" rx="2" fill="#1a73e8" />
      <MetroSquare>M</MetroSquare>
    </g>
  );
}

function MapDrawing() {
  const [sx1, sy1] = at("d", 245, 232);
  const [sx2, sy2] = at("d", 335, 297);
  const [vx1, vy1] = at("c", 1080, 245);
  const [vx2, vy2] = at("c", 1113, 338);
  const [gx, gy] = at("c", 42, 866);
  return (
    <MapCanvas viewBox="0 0 1082 582">
      <rect width="1082" height="582" fill="#f2f3f5" />
      {ZONES.map(([q, pts], i) => (
        <polygon key={i} transform={quadTransform(q)} points={pts} fill="#fdf4d7" />
      ))}
      {PARKS.map(([q, pts, fill], i) => (
        <polygon key={i} transform={quadTransform(q)} points={pts} fill={fill} />
      ))}
      {WATER.map(([q, pts], i) => (
        <polygon key={i} transform={quadTransform(q)} points={pts} fill="#9cc0f9" />
      ))}
      {ROADS.map(([q, w, pts], i) => (
        <polyline key={i} transform={quadTransform(q)} points={pts} fill="none" stroke="#fff" strokeWidth={w} />
      ))}
      {PARK_PATHS.map(([q, pts], i) => (
        <polyline key={i} transform={quadTransform(q)} points={pts} fill="none" stroke="#4fb06a" strokeWidth="1" />
      ))}
      {PARK_TRAILS.map(([q, pts], i) => (
        <polyline key={i} transform={quadTransform(q)} points={pts} fill="none" stroke="#4fb06a" strokeWidth="1" strokeDasharray="4 2" />
      ))}
      <polyline transform={quadTransform("a")} points="10,890 400,790 800,675 950,640 1060,625" fill="none" stroke="#f8b32c" strokeWidth="8" />
      <polyline transform={quadTransform("a")} points="10,890 400,790 800,675 950,640 1060,625" fill="none" stroke="#fde293" strokeWidth="5.5" />
      {BORDERS.map(([q, pts], i) => (
        <polyline key={i} transform={quadTransform(q)} points={pts} fill="none" stroke="#9aa0a6" strokeWidth="1" strokeDasharray="2 2" />
      ))}
      {STREETS.map(([q, x, y, text, angle, big], i) => (
        <Street key={i} q={q} x={x} y={y} text={text} angle={angle} big={big} />
      ))}
      <StreetName $big transform={`translate(${vx1} ${vy1}) rotate(4)`} dominantBaseline="central">SEINE-SAINT-DENIS</StreetName>
      <StreetName $big transform={`translate(${vx2} ${vy2}) rotate(4)`} dominantBaseline="central">VAL-DE-MARNE</StreetName>
      <StreetName $big transform={`translate(${sx1} ${sy1}) rotate(-33)`} dominantBaseline="central">SEINE-SAINT-DENIS</StreetName>
      <StreetName $big transform={`translate(${sx2} ${sy2}) rotate(-35)`} dominantBaseline="central">VAL-DE-MARNE</StreetName>
      {SHIELDS.map(([q, x, y, text], i) => (
        <Shield key={i} q={q} x={x} y={y} text={text} />
      ))}
      <Shield q="a" x={845} y={662} text="N302" red />
      {LABELS.map(([q, x, y, text, color, anchor], i) => {
        const [px, py] = at(q, x, y);
        return (
          <Label key={i} x={px} y={py} $c={color} textAnchor={anchor || "start"} dominantBaseline="central">
            {text}
          </Label>
        );
      })}
      {PINS.map(([q, x, y, color, glyph], i) => (
        <Pin key={i} q={q} x={x} y={y} color={color} glyph={glyph} />
      ))}
      <MetroBadge q="a" x={943} y={622} />
      <MetroBadge q="a" x={83} y={873} />
      <MetroSign q="a" x={122} y={870} />
      <MetroSign q="c" x={815} y={892} />
      <text x={gx} y={gy} fontSize="18" fontFamily="'Liberation Sans', sans-serif" stroke="#fff" strokeWidth="2" paintOrder="stroke">
        <tspan fill="#4285f4">G</tspan>
        <tspan fill="#ea4335">o</tspan>
        <tspan fill="#fbbc05">o</tspan>
        <tspan fill="#4285f4">g</tspan>
        <tspan fill="#34a853">l</tspan>
        <tspan fill="#ea4335">e</tspan>
      </text>
      <TrackerPin x={541} y={291} color="#00ff44" />
      <TrackerPin x={558} y={297} color="#3a00ff" />
    </MapCanvas>
  );
}

function Pegman() {
  return (
    <svg width="18" height="32" viewBox="0 0 18 32">
      <circle cx="9" cy="5" r="4.5" fill="#f5b21a" />
      <path d="M4 10h10q2 0 2.500 2L18 21h-2.500L13 15v16h-3v-9H8v9H5V15l-2.500 6H0l1.500-9q.5-2 2.500-2z" fill="#f5b21a" />
      <path d="M6 10h6l-3 5z" fill="#d8702a" />
    </svg>
  );
}

function FullscreenIcon() {
  return (
    <svg width="18" height="18" viewBox="0 0 18 18" fill="none" stroke="#666" strokeWidth="2">
      <path d="M1 6V1h5M12 1h5v5M17 12v5h-5M6 17H1v-5" />
    </svg>
  );
}

function LogoutIcon() {
  return (
    <svg width="14" height="14" viewBox="0 0 14 14" fill="none" stroke="#444" strokeWidth="1.2" strokeLinecap="round">
      <path d="M11.8 3.5A6 6 0 1 0 11.8 10.5" />
      <path d="M5.5 7H13M11.5 5.5 13 7l-1.5 1.5" />
    </svg>
  );
}

function RouteIcon() {
  return (
    <svg width="16" height="16" viewBox="0 0 16 16" fill="none" stroke="currentColor" strokeWidth="1.2">
      <circle cx="4.5" cy="3" r="1.8" />
      <circle cx="11.5" cy="13" r="1.8" />
      <path d="M6.3 3H11a2.500 2.500 0 0 1 0 5H5a2.500 2.500 0 0 0 0 5h4.700" />
    </svg>
  );
}

function ReportIcon() {
  return (
    <svg width="16" height="16" viewBox="0 0 16 16" fill="none" stroke="currentColor" strokeWidth="1.2">
      <path d="M7 14.5H3V1.500h9.500v6.500" />
      <path d="M5 4.500h5.500M5 7h3" />
      <circle cx="11.500" cy="11.500" r="3" />
      <path d="M11.500 10v1.500l1 .8" strokeWidth="1" />
    </svg>
  );
}

function TariffIcon() {
  return (
    <svg width="16" height="16" viewBox="0 0 16 16" fill="none" stroke="currentColor" strokeWidth="1.2">
      <rect x="2.5" y="1.5" width="11" height="13" />
      <path d="M5 4.5h6M5 7h6M2.500 9.500h3L8 12l2.500-2.500h3" />
    </svg>
  );
}

const MENU_ICON = { size: 16, strokeWidth: 1.5 };

const TRACKERS = [
  { name: "Home", date: "13-06-2023, 16:28", color: "#00ff44", second: false, shaded: true },
  { name: "Peugeot", date: "13-06-2023, 16:34", color: "#3a00ff", second: true, open: true },
];

const INFO = [
  ["IMEI:", "011386751837154"],
  ["Phone:", "+33 (0) 1 40 20 53 17"],
  ["Public:", "No"],
  ["Information:", "My car"],
  ["Average Fuel Consumption:", "0"],
  ["Tracker Model:", "GPS Tracker-Optimus 2.0 4G LTE"],
  ["Stop Time:", "120"],
  ["Park Time:", "300"],
  ["Paid:", "01-01-2000, 02:00"],
];

function App() {
  const more = (
    <Arrow>
      <ChevronDown size={14} strokeWidth={3} />
    </Arrow>
  );
  return (
    <Page>
      <GlobalStyle />
      <Header>
        <UserName>user1@example.com</UserName>
        <LogoutButton>
          <LogoutIcon />
          LOGOUT
        </LogoutButton>
      </Header>
      <Body>
        <Sidebar>
          <Menu>
            <MenuItem><LayoutGrid {...MENU_ICON} />Monitoring Objects</MenuItem>
            <MenuItem><Video {...MENU_ICON} />Online Cameras{more}</MenuItem>
            <MenuItem $open>
              <LocateFixed {...MENU_ICON} />Tracker Management
              <Arrow><ChevronUp size={14} strokeWidth={3} /></Arrow>
            </MenuItem>
            <SubMenu>
              <MenuItem $sub $active><LocateFixed {...MENU_ICON} />Trackers</MenuItem>
              <MenuItem $sub><RouteIcon />Routes</MenuItem>
              <MenuItem $sub><ReportIcon />Reports</MenuItem>
            </SubMenu>
            <MenuItem><UserRound {...MENU_ICON} />My Account{more}</MenuItem>
            <MenuItem><TariffIcon />Tariffs</MenuItem>
            <MenuItem><MessageCircleMore {...MENU_ICON} />Feedback</MenuItem>
            <MenuItem><Bell {...MENU_ICON} />Notifications</MenuItem>
            <MenuItem><UsersRound {...MENU_ICON} />Admin{more}</MenuItem>
          </Menu>
          <Collapse><ChevronLeft size={16} strokeWidth={2} /></Collapse>
        </Sidebar>
        <Content>
          <Card>
            <TitleRow>
              <Title>Trackers</Title>
              <RoundButton><Plus size={17} strokeWidth={1.5} /></RoundButton>
            </TitleRow>
            <Split>
              <Table>
                <Row $head $shaded>
                  <HeadCell />
                  <HeadCell>Name</HeadCell>
                  <HeadCell>Registration date</HeadCell>
                  <HeadCell>Speed</HeadCell>
                  <HeadCell>Visible</HeadCell>
                </Row>
                {TRACKERS.map((t) => (
                  <Row key={t.name} $shaded={t.shaded}>
                    <ExpandCell>
                      <ExpandIcon>
                        {t.open ? <Minus size={13} strokeWidth={1.3} /> : <Plus size={13} strokeWidth={1.3} />}
                      </ExpandIcon>
                    </ExpandCell>
                    <Cell>{t.name}</Cell>
                    <Cell>{t.date}</Cell>
                    <Cell>0</Cell>
                    <VisibleCell>
                      <Dot $color={t.color} />
                      <CheckBox $on><Check size={12} strokeWidth={3} /></CheckBox>
                      <CheckBox $on={t.second}>{t.second && <Check size={12} strokeWidth={3} />}</CheckBox>
                    </VisibleCell>
                  </Row>
                ))}
                <Details>
                  <div>
                    {INFO.map(([k, v]) => (
                      <InfoLine key={k}><b>{k}</b> {v}</InfoLine>
                    ))}
                    <InfoLine><b>Tracker Color:</b> <Dot $color="#3a00ff" /></InfoLine>
                  </div>
                  <Actions>
                    <IconButton><PenLine size={17} strokeWidth={1.5} /></IconButton>
                    <IconButton $danger><Trash size={17} strokeWidth={1.5} /></IconButton>
                  </Actions>
                </Details>
              </Table>
              <MapFrame>
                <MapDrawing />
                <MapSwitch>
                  <SwitchTab $active>Map</SwitchTab>
                  <SwitchTab>Satellite</SwitchTab>
                </MapSwitch>
                <MapControl $top={11}><FullscreenIcon /></MapControl>
                <MapControl $top={405}><Pegman /></MapControl>
                <MapControl $top={477} $h={80}>
                  <ZoomStep><Plus size={24} strokeWidth={3.5} /></ZoomStep>
                  <ZoomStep><Minus size={24} strokeWidth={3.5} /></ZoomStep>
                </MapControl>
                <ExpandMap>
                  <svg width="26" height="26" viewBox="0 0 26 26" fill="#fff" stroke="#fff" strokeWidth="2.5">
                    <path d="M4 22 22 4" />
                    <path d="M15 3h8v8z" strokeWidth="1" />
                    <path d="M3 15v8h8z" strokeWidth="1" />
                  </svg>
                </ExpandMap>
                <Attribution>
                  <span>Keyboard shortcuts</span>
                  <span>Map data ©2023 Google</span>
                  <span>Terms of Use</span>
                  <span>Report a map error</span>
                </Attribution>
              </MapFrame>
            </Split>
          </Card>
        </Content>
      </Body>
    </Page>
  );
}

export default App;
